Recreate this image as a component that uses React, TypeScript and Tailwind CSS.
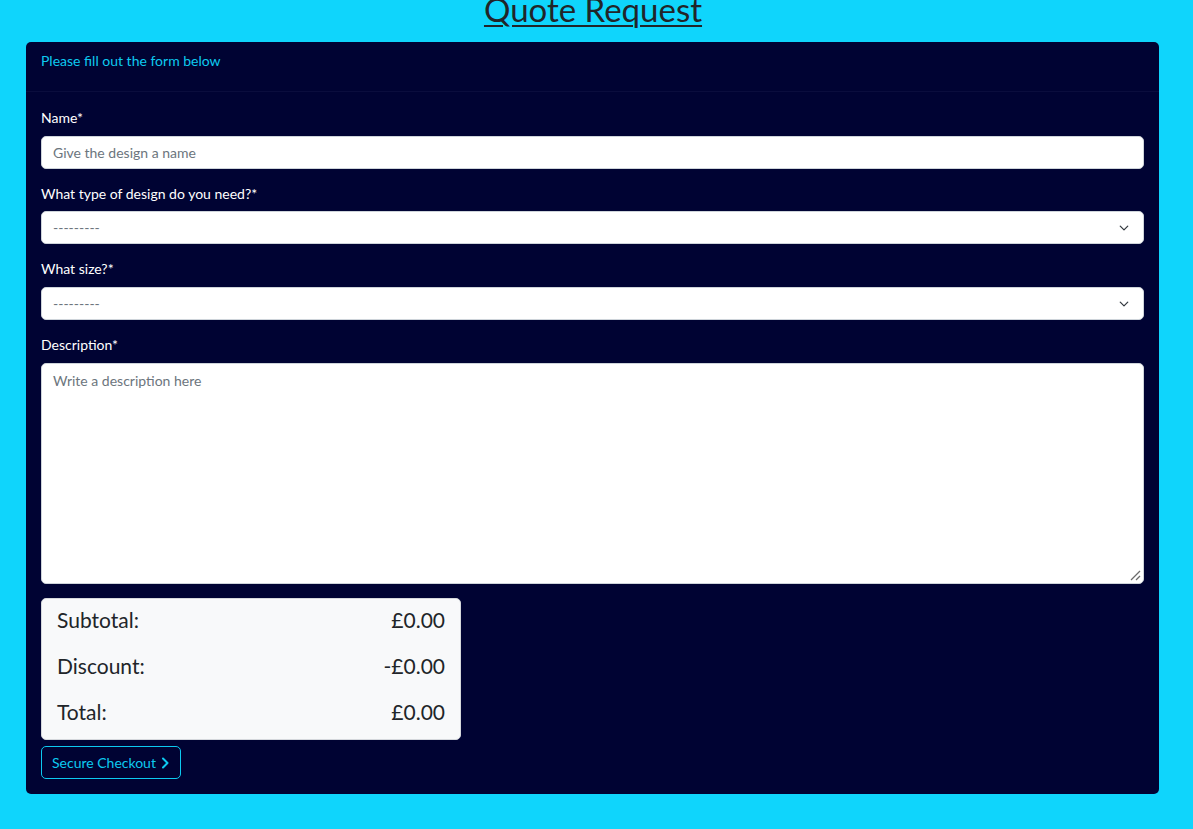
import React from "react";

const font = { fontFamily: 'Lato, "Segoe UI", "Noto Sans", "Liberation Sans", sans-serif' };

function Chevron() {
  return (
    <svg width="10" height="10" viewBox="0 0 16 16" className="absolute right-[14px] top-1/2 -translate-y-1/2" fill="none" stroke="#343a40" strokeWidth="2" strokeLinecap="round" strokeLinejoin="round">
      <path d="M2 5l6 6 6-6" />
    </svg>
  );
}

function SelectBox() {
  return (
    <div className="relative h-[33px] w-full rounded-[5px] border border-[#ced4da] bg-white">
      <div className="flex h-full items-center pl-[11px] text-[14px] text-[#6c757d]">---------</div>
      <Chevron />
    </div>
  );
}

export default function App() {
  return (
    <div className="min-h-[829px] w-full bg-[#0fd5fc] pb-[35px]" style={font}>
      <div className="flex h-[42px] justify-center overflow-hidden pr-[7px]">
        <h1 className="mt-[-15px] text-[33px] leading-[48px] text-[#212529] underline decoration-[2px] underline-offset-[3px]">
          Quote Request
        </h1>
      </div>
      <div className="mx-[26px] w-[1133px] rounded-[5px] bg-[#000333]">
        <div className="h-[50px] border-b border-[#0a0d3d] px-[15px] pt-[9px]">
          <p className="text-[14px] leading-[19px] text-[#0dcaf0]">Please fill out the form below</p>
        </div>
        <div className="px-[15px] pb-[15px] pt-[16px]">
          <label className="block text-[14px] leading-[19px] text-white">Name*</label>
          <div className="mt-[9px] flex h-[33px] w-full items-center rounded-[5px] border border-[#ced4da] bg-white pl-[11px] text-[14px] text-[#6c757d]">
            Give the design a name
          </div>
          <label className="mt-[15px] block text-[14px] leading-[19px] text-white">What type of design do you need?*</label>
          <div className="mt-[8px]">
            <SelectBox />
          </div>
          <label className="mt-[15px] block text-[14px] leading-[19px] text-white">What size?*</label>
          <div className="mt-[9px]">
            <SelectBox />
          </div>
          <label className="mt-[15px] block text-[14px] leading-[19px] text-white">Description*</label>
          <div className="relative mt-[9px] h-[221px] w-full rounded-[5px] border border-[#ced4da] bg-white px-[11px] pt-[7px] text-[14px] leading-[19px] text-[#6c757d]">
            Write a description here
            <svg width="12" height="12" viewBox="0 0 12 12" className="absolute bottom-[2px] right-[2px]" stroke="#6b6b6b" strokeWidth="1.3">
              <path d="M11 2L2 11" />
              <path d="M11 7L7 11" />
            </svg>
          </div>
          <div className="mt-[14px] w-[420px] rounded-[5px] border border-[#d5d8dc] bg-[#f8f9fa] px-[15px] pb-[8px] pt-[2px] text-[21px] text-[#212529]">
            <div className="flex h-[38px] items-center justify-between">
              <span>Subtotal:</span>
              <span>£0.00</span>
            </div>
            <div className="mt-[8px] flex h-[38px] items-center justify-between">
              <span>Discount:</span>
              <span>-£0.00</span>
            </div>
            <div className="mt-[8px] flex h-[38px] items-center justify-between">
              <span>Total:</span>
              <span>£0.00</span>
            </div>
          </div>
          <div className="mt-[6px] inline-flex h-[33px] items-center gap-[4px] rounded-[5px] border border-[#0dcaf0] px-[10px] text-[14px] text-[#0dcaf0]">
            <span>Secure Checkout</span>
            <svg width="10" height="12" viewBox="0 0 10 12" fill="none" stroke="#0dcaf0" strokeWidth="2" strokeLinecap="round" strokeLinejoin="round">
              <path d="M3 1.5L7.5 6 3 10.5" />
            </svg>
          </div>
        </div>
      </div>
    </div>
  );
}
